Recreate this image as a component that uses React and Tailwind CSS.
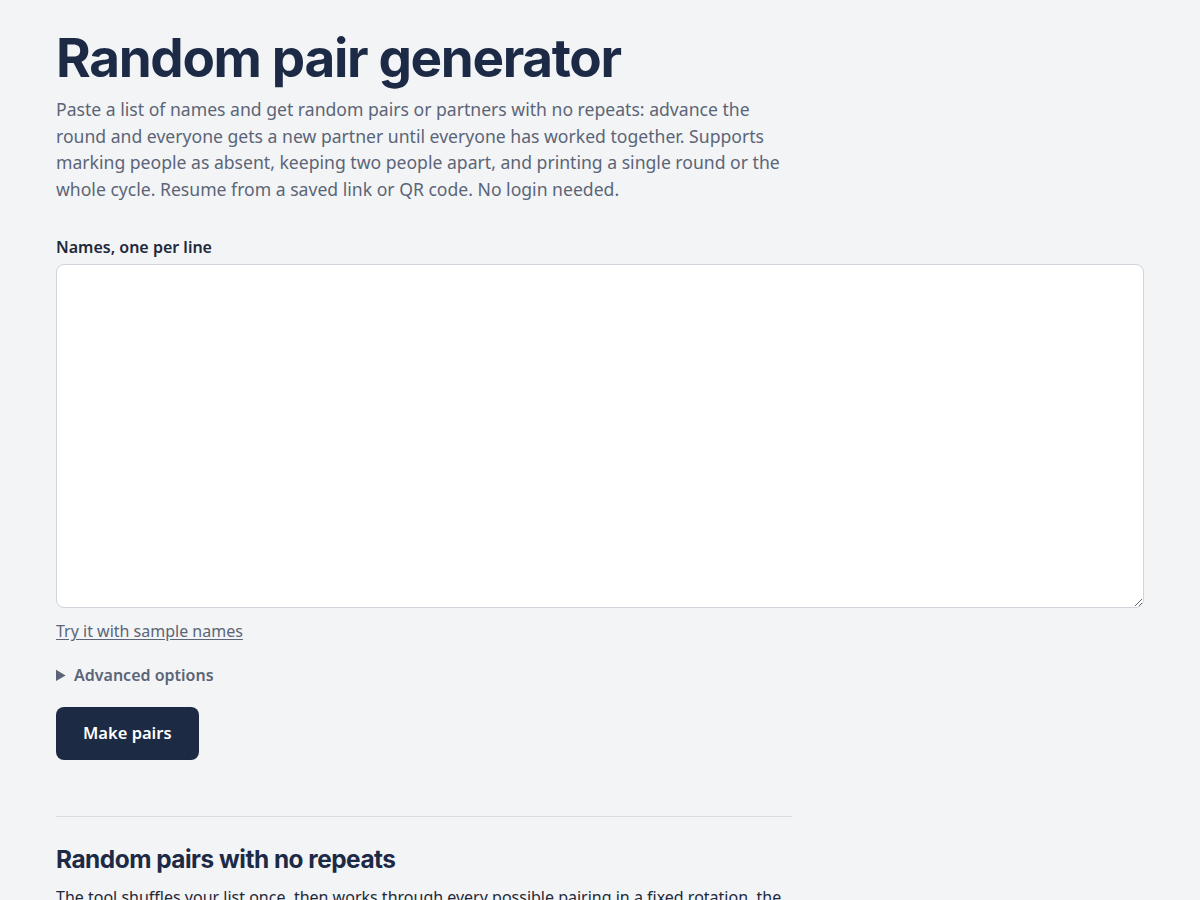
import React, { useState } from "react";

function App() {
  const [names, setNames] = useState("");

  return (
    <div className="min-h-screen bg-[#f3f4f6] font-['Noto_Sans',sans-serif] text-[#1e293b]">
      <main className="px-14 pt-[26px] pb-20">
        <h1 className="font-['Inter',sans-serif] text-[53px] font-bold leading-[64px] tracking-[-0.025em] text-[#1c2a46]">
          Random pair generator
        </h1>
        <p className="mt-[6px] max-w-[740px] text-[17.6px] leading-[26.5px] text-[#5b6577]">
          Paste a list of names and get random pairs or partners with no repeats: advance the
          round and everyone gets a new partner until everyone has worked together. Supports
          marking people as absent, keeping two people apart, and printing a single round or the
          whole cycle. Resume from a saved link or QR code. No login needed.
        </p>

        <form className="mt-[33px]" onSubmit={(e) => e.preventDefault()}>
          <label htmlFor="names" className="block text-[16px] font-semibold leading-6 text-[#1e293b]">
            Names, one per line
          </label>
          <textarea
            id="names"
            value={names}
            onChange={(e) => setNames(e.target.value)}
            className="mt-[5px] block h-[344px] w-full rounded-lg border border-[#d1d5db] bg-white p-3 text-[16px] focus:outline-none"
          />
          <button
            type="button"
            className="mt-[11px] text-[16px] leading-6 text-[#5b6577] underline underline-offset-2"
          >
            Try it with sample names
          </button>

          <details className="mt-5">
            <summary className="cursor-pointer text-[16px] font-semibold leading-6 text-[#5b6577] marker:text-[17px]">
              Advanced options
            </summary>
          </details>

          <button
            type="submit"
            className="mt-[20px] h-[53px] rounded-lg bg-[#1c2a44] px-[27px] text-[16.5px] font-semibold text-white"
          >
            Make pairs
          </button>
        </form>

        <hr className="mt-14 max-w-[736px] border-t border-[#d9dce1]" />

        <section className="max-w-[740px]">
          <h2 className="mt-[26px] font-['Inter',sans-serif] text-[24.4px] font-bold leading-8 tracking-[-0.02em] text-[#1c2a46]">
            Random pairs with no repeats
          </h2>
          <p className="mt-[9px] text-[16px] leading-[27px] text-[#1e293b]">
            The tool shuffles your list once, then works through every possible pairing in a fixed rotation, the
            same way a round-robin tournament schedule works, so nobody is paired with the same partner twice
            until the whole cycle is done.
          </p>
        </section>
      </main>
    </div>
  );
}

export default App;
